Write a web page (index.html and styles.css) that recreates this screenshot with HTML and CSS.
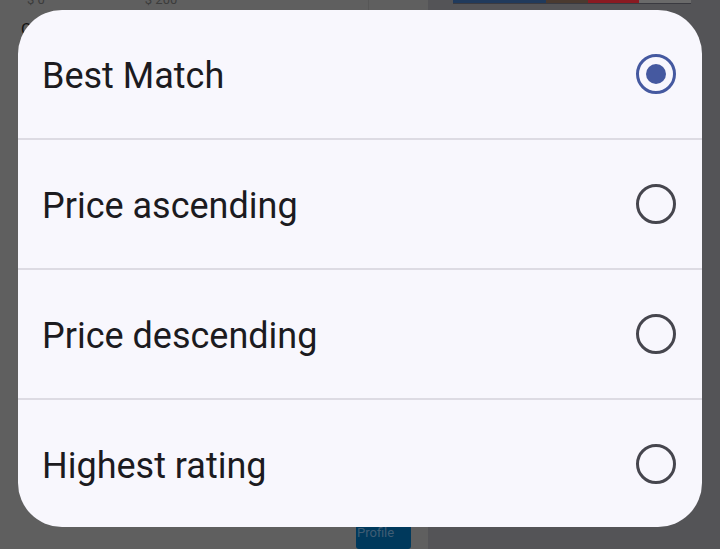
FILE: index.html
```html
<!DOCTYPE html>
<html>
<head>
<meta charset="utf-8">
<link rel="stylesheet" href="styles.css">
</head>
<body>
<div class="page">
  <div class="left-pane">
    <div class="price-scale">
      <span class="price">$ 0</span>
      <span class="price">$ 200</span>
    </div>
    <div class="peek">C</div>
    <div class="vline"></div>
    <div class="profile-btn">Profile</div>
  </div>
  <div class="right-pane">
    <div class="banner">
      <span class="b1"></span><span class="b2"></span><span class="b3"></span><span class="b4"></span>
    </div>
  </div>
</div>

<div class="dialog" role="radiogroup">
  <div class="option">
    <span class="label">Best Match</span>
    <span class="radio checked"></span>
  </div>
  <div class="divider"></div>
  <div class="option">
    <span class="label">Price ascending</span>
    <span class="radio"></span>
  </div>
  <div class="divider"></div>
  <div class="option">
    <span class="label">Price descending</span>
    <span class="radio"></span>
  </div>
  <div class="divider"></div>
  <div class="option">
    <span class="label">Highest rating</span>
    <span class="radio"></span>
  </div>
</div>
</body>
</html>
```
FILE: styles.css
```css
html, body {
  margin: 0;
  padding: 0;
  width: 720px;
  height: 549px;
  overflow: hidden;
  font-family: Roboto, "Noto Sans", sans-serif;
}

.page {
  display: flex;
  width: 720px;
  height: 549px;
}

.left-pane {
  position: relative;
  width: 428px;
  background: #5f5f5f;
}

.price-scale {
  display: flex;
  gap: 100px;
  padding-left: 27px;
  margin-top: -8px;
}

.price {
  font-size: 13px;
  line-height: 15px;
  color: #3c3c3c;
}

.peek {
  position: absolute;
  left: 21px;
  top: 20px;
  font-size: 16px;
  color: #111;
}

.vline {
  position: absolute;
  left: 368px;
  top: 0;
  width: 1px;
  height: 10px;
  background: #575757;
}

.profile-btn {
  position: absolute;
  left: 356px;
  top: 508px;
  width: 55px;
  height: 41px;
  box-sizing: border-box;
  border-radius: 3px;
  background: #00395c;
  color: #3f5d74;
  font-size: 13px;
  line-height: 15px;
  padding: 17px 0 0 1px;
}

.right-pane {
  flex: 1;
  background: #545457;
  position: relative;
}

.banner {
  position: absolute;
  left: 25px;
  top: 0;
  width: 238px;
  height: 3px;
  display: flex;
  border-bottom: 1px solid #3a3a40;
}

.banner span { height: 100%; }
.b1 { flex: 90; background: #203a5c; }
.b2 { flex: 40; background: #4a3a30; }
.b3 { flex: 50; background: #8a1a22; }
.b4 { flex: 50; background: #6a6a6a; }

.dialog {
  position: absolute;
  left: 18px;
  top: 10px;
  width: 684px;
  height: 517px;
  background: #f8f7fd;
  border-radius: 44px;
  overflow: hidden;
  display: flex;
  flex-direction: column;
}

.option {
  flex: 0 0 128px;
  display: flex;
  align-items: center;
  justify-content: space-between;
  padding: 0 26px 0 24px;
}

.label {
  font-size: 36px;
  color: #1c1b1f;
  padding-top: 4px;
}

.divider {
  flex: 0 0 2px;
  background: #dddbe3;
}

.radio {
  box-sizing: border-box;
  width: 40px;
  height: 40px;
  border-radius: 50%;
  border: 3.5px solid #46464e;
  position: relative;
}

.radio.checked {
  border-color: #4559a0;
}

.radio.checked::after {
  content: "";
  position: absolute;
  left: 50%;
  top: 50%;
  width: 20px;
  height: 20px;
  margin: -10px 0 0 -10px;
  border-radius: 50%;
  background: #4559a0;
}
```
